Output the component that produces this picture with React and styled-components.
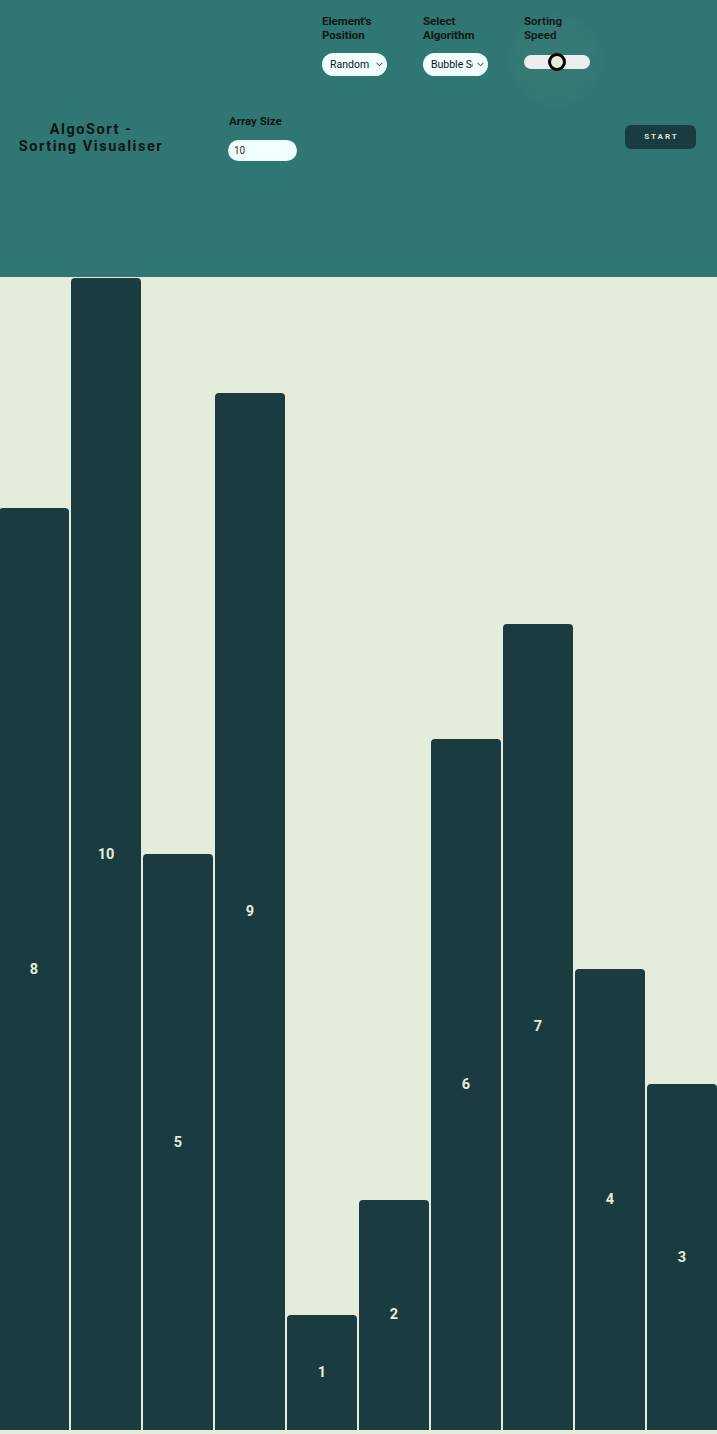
import React from "react";
import styled, { createGlobalStyle } from "styled-components";

const GlobalStyle = createGlobalStyle`
  html, body { margin: 0; padding: 0; }
  body {
    font-family: Roboto, "Liberation Sans", sans-serif;
    background: #e4ecdb;
    overflow-x: hidden;
  }
  * { box-sizing: border-box; }
`;

const Page = styled.div`
  width: 717px;
  min-height: 1434px;
  background: #e4ecdb;
  padding-bottom: 4px;
  overflow: hidden;
`;

const Header = styled.header`
  height: 277px;
  padding-bottom: 2px;
  background: #307672;
  display: flex;
  align-items: center;
`;

const Title = styled.h1`
  margin: 0;
  width: 182px;
  text-align: center;
  font-size: 14.5px;
  line-height: 17px;
  font-weight: 700;
  letter-spacing: 1.55px;
  color: #0e1616;
`;

const Field = styled.div`
  display: flex;
  flex-direction: column;
  margin-left: ${(p) => p.$ml || 0}px;
  position: relative;
`;

const Label = styled.label`
  font-size: 11.5px;
  line-height: 14px;
  font-weight: 700;
  color: #0e1616;
  margin-bottom: ${(p) => p.$mb}px;
  width: ${(p) => p.$w || "auto"};
  padding-left: ${(p) => p.$pl || 0}px;
`;

const TextInput = styled.input`
  width: 69px;
  height: 21px;
  border: none;
  border-radius: 11px;
  background: #effffd;
  padding: 0 6px;
  font-family: Roboto, "Liberation Sans", sans-serif;
  font-size: 10px;
  color: #333;
  outline: none;
`;

const Controls = styled.div`
  align-self: flex-start;
  padding-top: 14px;
  margin-left: 25px;
  display: flex;
  gap: 36px;
`;

const SelectBox = styled.div`
  position: relative;
  width: 65px;
  height: 23px;
`;

const Select = styled.select`
  -webkit-appearance: none;
  appearance: none;
  width: 65px;
  height: 23px;
  border: none;
  border-radius: 12px;
  background: #effffd;
  padding: 0 15px 0 8px;
  font-family: Roboto, "Liberation Sans", sans-serif;
  font-size: 10.5px;
  color: #111;
  outline: none;
`;

const Chevron = styled.svg`
  position: absolute;
  right: 4px;
  top: 9px;
  width: 7px;
  height: 5px;
  pointer-events: none;
`;

const SliderWrap = styled.div`
  position: relative;
  width: 66px;
  height: 17px;
  display: flex;
  align-items: center;
  &::before {
    content: "";
    position: absolute;
    left: -18px;
    top: -42px;
    width: 100px;
    height: 100px;
    border-radius: 50%;
    background: radial-gradient(circle, rgba(255,255,255,0.035) 0%, rgba(255,255,255,0.025) 55%, rgba(255,255,255,0) 72%);
    pointer-events: none;
  }
`;

const Range = styled.input`
  -webkit-appearance: none;
  appearance: none;
  width: 66px;
  height: 14px;
  margin: 0;
  border-radius: 7px;
  background: #ededed;
  outline: none;
  position: relative;
  &::-webkit-slider-thumb {
    -webkit-appearance: none;
    width: 18px;
    height: 18px;
    border-radius: 50%;
    background: #e4ecdb;
    border: 3px solid #000;
  }
`;

const StartButton = styled.button`
  margin-left: auto;
  margin-right: 21px;
  margin-bottom: 2px;
  width: 71px;
  height: 24px;
  border: none;
  border-radius: 6px;
  background: #1a3c40;
  color: #dfe6dc;
  font-family: Roboto, "Liberation Sans", sans-serif;
  font-size: 8px;
  font-weight: 700;
  letter-spacing: 2px;
  padding: 0 0 0 2px;
`;

const Bars = styled.div`
  width: 718px;
  margin-left: -1px;
  height: 1153px;
  padding-top: 1px;
  display: flex;
  align-items: flex-end;
  gap: 2px;
`;

const Bar = styled.div`
  width: 70px;
  flex: none;
  background: #1a3c40;
  border-radius: 4px 4px 0 0;
  display: flex;
  align-items: center;
  justify-content: center;
  color: #e4ecdb;
  font-size: 14.5px;
  font-weight: 700;
`;

const values = [8, 10, 5, 9, 1, 2, 6, 7, 4, 3];

function Dropdown({ defaultValue, options }) {
  return (
    <SelectBox>
      <Select defaultValue={defaultValue}>
        {options.map(([v, t]) => (
          <option key={v} value={v}>{t}</option>
        ))}
      </Select>
      <Chevron viewBox="0 0 7 5">
        <path d="M0.6 0.8 L3.5 3.8 L6.4 0.8" fill="none" stroke="#333" strokeWidth="1" />
      </Chevron>
    </SelectBox>
  );
}

export default function App() {
  return (
    <>
      <GlobalStyle />
      <Page>
        <Header>
          <Title>
            AlgoSort -<br />
            Sorting Visualiser
          </Title>
          <Field $ml={46}>
            <Label $mb={12} $pl={1}>Array Size</Label>
            <TextInput defaultValue="10" />
          </Field>
          <Controls>
            <Field>
              <Label $mb={11} $w="65px">Element's Position</Label>
              <Dropdown
                defaultValue="random"
                options={[["random", "Random"], ["sorted", "Sorted"], ["reversed", "Reversed"]]}
              />
            </Field>
            <Field>
              <Label $mb={11} $w="65px">Select Algorithm</Label>
              <Dropdown
                defaultValue="bubble"
                options={[["bubble", "Bubble Sort"], ["selection", "Selection Sort"], ["insertion", "Insertion Sort"]]}
              />
            </Field>
            <Field>
              <Label $mb={11} $w="65px">Sorting Speed</Label>
              <SliderWrap>
                <Range type="range" min="0" max="100" defaultValue="50" />
              </SliderWrap>
            </Field>
          </Controls>
          <StartButton>START</StartButton>
        </Header>
        <Bars>
          {values.map((v, i) => (
            <Bar key={i} style={{ height: `${v * 10}%` }}>
              {v}
            </Bar>
          ))}
        </Bars>
      </Page>
    </>
  );
}
